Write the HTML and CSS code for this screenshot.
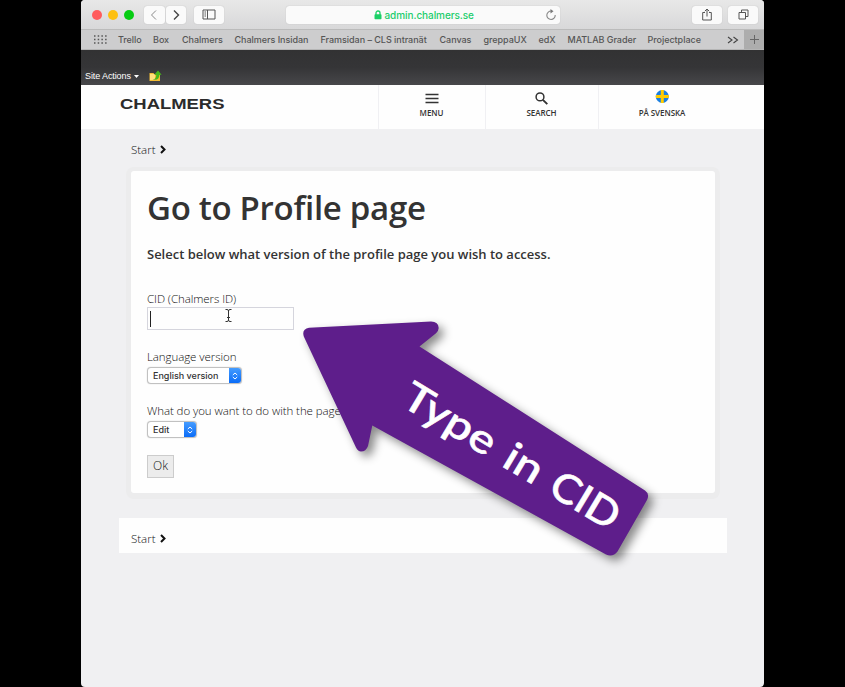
FILE: index.html
```html
<!DOCTYPE html>
<html lang="en">
<head>
<meta charset="utf-8">
<title>Go to Profile page</title>
<link rel="stylesheet" href="styles.css">
</head>
<body>
<div class="window">
  <div class="toolbar">
    <div class="lights"><i class="red"></i><i class="yellow"></i><i class="green"></i></div>
    <div class="nav">
      <span class="tool"><svg width="8" height="12" viewBox="0 0 8 12"><path d="M6 1.500 1.500 6 6 10.500" stroke="#888"/></svg></span>
      <span class="tool"><svg width="8" height="12" viewBox="0 0 8 12"><path d="M2 1.500 6.500 6 2 10.500" stroke="#444" stroke-width="1.400"/></svg></span>
    </div>
    <span class="tool sidebar"><svg width="14" height="11" viewBox="0 0 14 11"><path d="M1 1h12v9H1zM5.500 1v9M2.500 3h1.500M2.500 5h1.500M2.500 7h1.500" stroke="#555"/></svg></span>
    <div class="address">
      <svg class="lock" width="8" height="10" viewBox="0 0 8 10"><path d="M2 5V3a2 2 0 0 1 4 0v2" stroke="#1bd066" stroke-width="1.300"/><rect x=".5" y="4.200" width="7" height="5" rx=".7" fill="#1bd066"/></svg>
      <span class="url">admin.chalmers.se</span>
      <svg class="reload" width="12" height="12" viewBox="0 0 12 12"><path d="M6.500 2.100A4.200 4.200 0 1 0 10.200 6" stroke="#888" stroke-width="1.100"/><path d="M5.500 0 8.500 2.200 5.500 4.500z" fill="#777"/></svg>
    </div>
    <span class="tool share"><svg width="12" height="13" viewBox="0 0 12 13"><path d="M4 4.500H1.700v7.500h8.600V4.500H8M6 8.500V1.200M3.800 3.200 6 1l2.200 2.200" stroke="#555"/></svg></span>
    <span class="tool tabs"><svg width="11" height="11" viewBox="0 0 11 11"><path d="M1 3.500h6.500V10H1zM3.500 3.500V1H10v6.500H7.500" stroke="#555"/></svg></span>
  </div>
  <div class="bookmarks">
    <svg class="dots" width="13" height="9" viewBox="0 0 13 9"><path d="M0 1h13M0 4.500h13M0 8h13" stroke="#555" stroke-width="1.300" stroke-dasharray="1.500 2.200"/></svg>
    <span>Trello</span><span>Box</span><span>Chalmers</span><span>Chalmers Insidan</span><span>Framsidan – CLS intranät</span><span>Canvas</span><span>greppaUX</span><span>edX</span><span>MATLAB Grader</span><span>Projectplace</span>
    <svg width="12" height="8" viewBox="0 0 12 8"><path d="M1 1l4 3-4 3M6.500 1l4 3-4 3" stroke="#444" stroke-width="1.100"/></svg>
    <span class="plus"><svg width="9" height="9" viewBox="0 0 9 9"><path d="M0 4.500h9M4.500 0v9" stroke="#666"/></svg></span>
  </div>
  <div class="ribbon">
    <span>Site Actions</span>
    <svg class="caret" width="5" height="3" viewBox="0 0 5 3"><path d="M0 0h5L2.500 3z" fill="#fff"/></svg>
    <svg width="13" height="12" viewBox="0 0 13 12"><path d="M.5 3h4l1 1.500H11V11H.5z" fill="#f3bd35"/><path d="M1 4h5v6H1z" fill="#ffe07c"/><path d="M3.500 9.500C6 9.500 7.300 8 7.300 4.800H5.200L9 .5l3.600 4.300h-2.200C10.400 8.500 8 10.800 3.500 9.500z" fill="#48b81b"/></svg>
  </div>
  <header class="site">
    <svg class="logo" width="106" height="14" viewBox="0 0 106 14"><text x="0" y="12" textLength="104.500" lengthAdjust="spacingAndGlyphs">CHALMERS</text></svg>
    <div class="item"><svg width="14" height="14" viewBox="0 0 14 14"><path d="M.5 3.500h13M.5 7.500h13M.5 11.500h13" stroke="#333" stroke-width="1.500"/></svg><span>MENU</span></div>
    <div class="item"><svg width="14" height="14" viewBox="0 0 14 14"><circle cx="5" cy="5.900" r="3.900" stroke="#333" stroke-width="1.500"/><path d="M7.900 8.800 12.300 13.200" stroke="#333" stroke-width="1.900"/></svg><span>SEARCH</span></div>
    <div class="item last"><svg class="flag" width="14" height="14" viewBox="0 0 14 14"><circle cx="7.300" cy="7.500" r="6.500" fill="#1b7fe0"/><path d="M.8 7.500h13M7.300 1v13" stroke="#fc0" stroke-width="3"/></svg><span>PÅ SVENSKA</span></div>
  </header>
  <nav class="crumb"><span>Start</span><svg width="6" height="9" viewBox="0 0 6 9"><path d="M1 1l3.500 3.500L1 8" stroke="#111" stroke-width="2"/></svg></nav>
  <main class="card">
    <h1>Go to Profile page</h1>
    <h2>Select below what version of the profile page you wish to access.</h2>
    <label>CID (Chalmers ID)</label>
    <div class="field"><i class="cursor"></i><svg width="7" height="13" viewBox="0 0 7 13"><path d="M.5.5h1.500q1.500 0 1.500 1.500Q3.500.5 5 .5h1.500M3.500 2v9M.5 12.500h1.500q1.500 0 1.500-1.500 0 1.500 1.500 1.500h1.500M2 8.500h3" stroke="#333"/></svg></div>
    <label class="lang-label">Language version</label>
    <div class="select wide"><span>English version</span><b><svg width="6" height="8" viewBox="0 0 6 8"><path d="M.8 3l2.200-2 2.200 2M.8 5l2.200 2 2.200-2" stroke="#fff"/></svg></b></div>
    <label class="do-label">What do you want to do with the page?</label>
    <div class="select"><span>Edit</span><b><svg width="6" height="8" viewBox="0 0 6 8"><path d="M.8 3l2.200-2 2.200 2M.8 5l2.200 2 2.200-2" stroke="#fff"/></svg></b></div>
    <div class="ok">Ok</div>
  </main>
  <nav class="crumb bottom"><span>Start</span><svg width="6" height="9" viewBox="0 0 6 9"><path d="M1 1l3.500 3.500L1 8" stroke="#111" stroke-width="2"/></svg></nav>
</div>
<svg class="callout" width="845" height="687" viewBox="0 0 845 687">
  <path class="arrow" d="M309 327.700 431 321.500Q438.500 321.500 438.700 328 438.500 331 436 333.200L419.500 346.500 645 490.500Q650 494 647 500L617.500 551.500Q613 557.500 606 554.500L372.300 425.500 368 446Q366 451.600 361 451.600 358 451.400 356 447.500L303.800 336.500Q301.500 329 309 327.700Z"/>
  <g transform="translate(400 405) rotate(31)">
    <text x="-1" textLength="102" lengthAdjust="spacingAndGlyphs">Type</text>
    <text x="117" textLength="39" lengthAdjust="spacingAndGlyphs">in</text>
    <text x="171" textLength="74" lengthAdjust="spacingAndGlyphs">CID</text>
  </g>
</svg>
</body>
</html>
```
FILE: styles.css
```css
* { box-sizing: border-box; }
body { margin: 0; height: 687px; background: #000; overflow: hidden; font-family: "Open Sans", sans-serif; color: #333; }
svg { display: block; fill: none; flex: none; }
.window { width: 683px; height: 687px; margin-left: 81px; background: #f0f0f2; border-radius: 4px; overflow: hidden; }

.toolbar { height: 29px; display: flex; align-items: center; padding: 0 6px 0 11px; background: linear-gradient(#e8e8e8, #d8d8d9); }
.lights { display: flex; gap: 6px; margin-right: 10px; }
.lights i { width: 10px; height: 10px; border-radius: 50%; }
.red { background: #ff5b5c; }
.yellow { background: #fdc010; }
.green { background: #06cc12; }
.nav { display: flex; gap: 1px; margin-right: 8px; }
.tool { height: 18px; width: 20.5px; display: flex; align-items: center; justify-content: center; background: #fafafa; border-radius: 3px; box-shadow: 0 0 1px #aaa; }
.sidebar { width: 30px; margin-right: 62px; }
.address { width: 274px; height: 18px; display: flex; align-items: center; background: #fafafa; border-radius: 3px; box-shadow: 0 0 1px #aaa; margin-right: 132px; padding: 0 3px 0 88px; }
.url { font: 500 10px/12px Inter, sans-serif; letter-spacing: -.2px; color: #22cd6c; margin-left: 2.500px; font-size: 10px; letter-spacing: -.07px; }
.reload { margin-left: auto; }
.share { width: 30px; margin-right: 6px; }
.tabs { width: 30px; }

.bookmarks { height: 21px; display: grid; align-items: center; border-top: 1px solid #bbb; border-bottom: 1px solid #b5b5b5; background: #cdcdce; padding-left: 13px;
  grid-template-columns: 24px 35px 29px 52.500px 86px 119px 44px 55px 29px 80px 79px 17.500px 20px; font: 500 9px Inter, sans-serif; letter-spacing: -.03px; color: #555; white-space: nowrap; }
.plus { height: 19px; background: #adadad; display: flex; align-items: center; justify-content: center; }

.ribbon { height: 35px; display: flex; align-items: flex-end; padding: 0 4px 2px; background: linear-gradient(#323233, #353537 50%, #47474a); color: #fff; font: 9px/14px "Liberation Sans", sans-serif; letter-spacing: -.1px; }
.ribbon .caret { margin: 0 10px 5px 3.500px; }
.ribbon svg:last-child { margin-bottom: 1px; }

.site { height: 44px; display: grid; grid-template-columns: 297px 107px 113px 128px; background: #fefefe; }
.logo { margin: 12px 0 0 39px; }
.logo text { font: bold 14.500px "Liberation Sans", sans-serif; fill: #2b2b2b; }
.item { border-left: 1px solid #f0f0f3; display: flex; flex-direction: column; align-items: center; padding: 6px 1px 0 0; font-size: 8px; line-height: 10px; font-weight: 600; letter-spacing: -.05px; }
.item span { margin-top: 3px; }
.flag { margin: -2px 0 2px; }

.crumb { display: flex; align-items: center; gap: 4px; height: 42px; padding: 0 0 1px 50px; font-size: 11.500px; font-weight: 300; color: #111; }
.card { width: 584px; height: 322px; margin-left: 50px; background: #fefefe; border-radius: 3px; box-shadow: 0 1px 0 5px #ececed; padding: 15px 16px; }
h1 { margin: 0; font-size: 33px; line-height: 44px; font-weight: 600; letter-spacing: -.3px; white-space: nowrap; }
h2 { margin: 15px 0 0; font-size: 13px; line-height: 18px; font-weight: 600; letter-spacing: -.01px; white-space: nowrap; }
label { display: block; margin-top: 28px; font-size: 11.500px; line-height: 16px; font-weight: 300; letter-spacing: -.07px; color: #111; white-space: nowrap; }
.field { width: 147px; height: 23px; border: 1px solid #d5d5dd; display: flex; align-items: center; padding-left: 2px; }
.cursor { width: 1px; height: 16px; background: #222; margin-right: 74px; }
.field svg { margin-top: -6px; }
.lang-label { margin-top: 19px; }
.do-label { margin-top: 20px; }
.select { display: flex; justify-content: space-between; width: 48px; height: 15px; margin: 3px 0 0 1px; border-radius: 3px; background: #fff; box-shadow: 0 0 1px 0.500px #bbb; font: 500 9px/15px Inter, sans-serif; padding-left: 5px; }
.wide { width: 93px; }
.select b { width: 12px; border-radius: 0 3px 3px 0; background: linear-gradient(#459cff, #0a6cf7); display: flex; align-items: center; justify-content: center; }
.ok { width: 27px; height: 23px; margin-top: 18px; border: 1px solid #ccc; background: #ececec; font-size: 12px; line-height: 20px; font-weight: 300; text-align: center; color: #111; }
.bottom { width: 608px; height: 35px; margin: 25px 0 0 38px; padding: 5px 0 0 12px; background: #fefefe; }

.callout { position: absolute; left: 0; top: 0; }
.arrow { fill: #5e1e8b; filter: drop-shadow(5px 5px 5px rgba(0, 0, 0, .45)); }
.callout text { font: 500 40px Lato, sans-serif; fill: #fff; stroke: #fff; stroke-width: .6px; }
```
